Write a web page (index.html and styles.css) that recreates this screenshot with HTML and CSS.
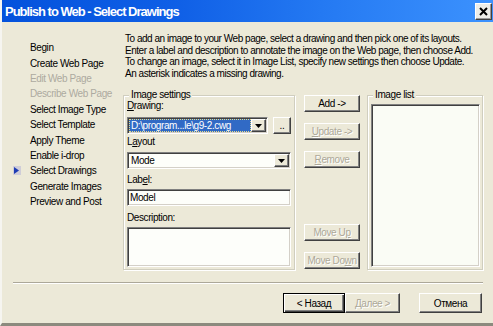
FILE: index.html
```html
<!DOCTYPE html>
<html>
<head>
<meta charset="utf-8">
<title>Publish to Web - Select Drawings</title>
<link rel="stylesheet" href="styles.css">
</head>
<body>
<div class="window">
  <div class="titlebar">
    <span class="title">Publish to Web - Select Drawings</span>
    <span class="close"><svg width="9" height="9" viewBox="0 0 9 9"><path d="M1 1L8 8M8 1L1 8" stroke="#000" stroke-width="2"/></svg></span>
  </div>
  <div class="content">
    <nav class="nav">
      <div class="step"><span class="mark"></span>Begin</div>
      <div class="step"><span class="mark"></span>Create Web Page</div>
      <div class="step disabled"><span class="mark"></span>Edit Web Page</div>
      <div class="step disabled"><span class="mark"></span>Describe Web Page</div>
      <div class="step"><span class="mark"></span>Select Image Type</div>
      <div class="step"><span class="mark"></span>Select Template</div>
      <div class="step"><span class="mark"></span>Apply Theme</div>
      <div class="step"><span class="mark"></span>Enable i-drop</div>
      <div class="step"><span class="mark"><svg width="8" height="9" viewBox="0 0 8 9"><rect width="8" height="9" fill="#CFCDD8"/><path d="M1 1L6 4.5L1 8Z" fill="#1E3CB4"/></svg></span>Select Drawings</div>
      <div class="step"><span class="mark"></span>Generate Images</div>
      <div class="step"><span class="mark"></span>Preview and Post</div>
    </nav>
    <main class="main">
      <p class="intro">To add an image to your Web page, select a drawing and then pick one of its layouts.<br>Enter a label and description to annotate the image on the Web page, then choose Add.<br>To change an image, select it in Image List, specify new settings then choose Update.<br>An asterisk indicates a missing drawing.</p>
      <div class="row">
        <div class="group settings">
          <div class="legend">Image settings</div>
          <div class="lbl"><u>D</u>rawing:</div>
          <div class="drawing-row">
            <div class="combo sunken drawing-combo">
              <div class="field focused">D:\program...le\g9-2.cwg</div>
              <div class="drop raised"><svg width="7" height="4" viewBox="0 0 7 4"><path d="M0 0H7L3.5 4Z" fill="#000"/></svg></div>
            </div>
            <div class="btn raised browse">..</div>
          </div>
          <div class="lbl lbl-layout">L<u>a</u>yout</div>
          <div class="combo sunken layout-combo">
            <div class="field">Mode</div>
            <div class="drop raised"><svg width="7" height="4" viewBox="0 0 7 4"><path d="M0 0H7L3.5 4Z" fill="#000"/></svg></div>
          </div>
          <div class="lbl lbl-label">Lab<u>e</u>l:</div>
          <div class="input sunken">Model</div>
          <div class="lbl lbl-desc">Description:</div>
          <div class="textarea sunken"></div>
        </div>
        <div class="btncol">
          <div class="btn raised">Add -&gt;</div>
          <div class="btn raised disabled gap"><u>U</u>pdate -&gt;</div>
          <div class="btn raised disabled gap"><u>R</u>emove</div>
          <div class="btn raised disabled push">Move U<u>p</u></div>
          <div class="btn raised disabled gap">Move Do<u>w</u>n</div>
        </div>
        <div class="group imglist">
          <div class="legend">Image list</div>
          <div class="listbox sunken"></div>
        </div>
      </div>
    </main>
  </div>
  <div class="sep"></div>
  <div class="footer">
    <div class="btn fbtn default">&lt; Назад</div>
    <div class="btn fbtn raised disabled next">Далее &gt;</div>
    <div class="btn fbtn raised cancel">Отмена</div>
  </div>
</div>
</body>
</html>
```
FILE: styles.css
```css
* { box-sizing: border-box; }
html, body { margin: 0; padding: 0; }
body {
  background: #ECE9D8;
  font-family: "Liberation Sans", Arial, sans-serif;
  font-size: 10px;
  letter-spacing: -0.4px;
  color: #000;
}
u { text-decoration: underline; text-underline-offset: 1px; }

.window {
  width: 493px;
  height: 326px;
  display: flex;
  flex-direction: column;
  background: #ECE9D8;
  border-left: 2px solid #F6F5F0;
  border-bottom: 3px solid #8C8A7E;
  overflow: hidden;
}

.titlebar {
  height: 22px;
  flex: none;
  display: flex;
  align-items: center;
  padding-left: 3px;
  background: linear-gradient(to right, #0452DC 0%, #0F5FE6 35%, #2479F2 65%, #3C92FE 100%);
}
.title {
  color: #fff;
  font-weight: bold;
  font-size: 13px;
  letter-spacing: -1px;
}
.close {
  margin-left: auto;
  margin-right: 1px;
  width: 17px;
  height: 17px;
  display: flex;
  align-items: center;
  justify-content: center;
  background: #EDEDE8;
  border: 1px solid;
  border-color: #fff #404040 #404040 #fff;
  box-shadow: inset -1px -1px 0 #9A9A9A;
}

.content {
  display: flex;
  height: 248px;
  flex: none;
}

.nav {
  width: 121px;
  flex: none;
  padding: 18px 0 0 11px;
}
.step {
  display: flex;
  align-items: center;
  height: 15.4px;
  white-space: nowrap;
}
.mark {
  width: 17px;
  flex: none;
  display: flex;
  align-items: center;
}
.step.disabled { color: #ADAAA0; }

.main { flex: 1; padding-top: 11px; }
.intro {
  margin: 0;
  padding-left: 2px;
  line-height: 11.5px;
  letter-spacing: -0.47px;
  white-space: nowrap;
}

.row {
  display: flex;
  margin-top: 16px;
}

.group {
  border: 1px solid #D0CEBF;
  box-shadow: inset 1px 1px 0 #fff, 1px 1px 0 #fff;
  display: flex;
  flex-direction: column;
}
.legend {
  align-self: flex-start;
  margin: -7px 0 -1px 2px;
  padding: 0 2px;
  background: #ECE9D8;
  height: 12px;
  line-height: 12px;
  white-space: nowrap;
}
.settings {
  width: 172px;
  flex: none;
  padding: 0 3px 2px 3px;
}
.lbl { height: 12px; line-height: 12px; white-space: nowrap; }
.lbl-layout { margin-top: 2px; }
.lbl-label { margin-top: 5px; }
.lbl-desc { margin-top: 6px; }

.sunken {
  border: 1px solid;
  border-color: #808080 #fff #fff #808080;
  box-shadow: inset 1px 1px 0 #404040, inset -1px -1px 0 #D4D0C8;
  background: #FDFEFA;
}
.raised {
  background: #ECE9D8;
  border: 1px solid;
  border-color: #fff #404040 #404040 #fff;
  box-shadow: inset -1px -1px 0 #808080;
}

.drawing-row {
  display: flex;
  margin-top: 5px;
  height: 17px;
}
.combo {
  display: flex;
  padding: 1px;
  height: 17px;
}
.drawing-combo { width: 141px; flex: none; }
.layout-combo { margin-top: 4px; }
.field {
  flex: 1;
  min-width: 0;
  line-height: 13px;
  padding-left: 2px;
  white-space: nowrap;
  overflow: hidden;
}
.field.focused {
  background: #316AC5;
  color: #fff;
  outline: 1px dotted #E8DC8A;
  outline-offset: -1px;
}
.drop {
  width: 15px;
  flex: none;
  display: flex;
  align-items: center;
  justify-content: center;
}
.browse {
  width: 18px;
  margin-left: 5px;
  height: 17px;
}

.input {
  margin-top: 3px;
  height: 17px;
  line-height: 15px;
  padding-left: 2px;
}
.textarea {
  margin-top: 3px;
  height: 40px;
}

.btncol {
  width: 56px;
  flex: none;
  margin: 0 7px 0 9px;
  display: flex;
  flex-direction: column;
  padding-bottom: 1px;
}
.btn {
  height: 17px;
  display: flex;
  align-items: center;
  justify-content: center;
  white-space: nowrap;
  flex: none;
}
.btn.gap { margin-top: 11px; }
.btn.push { margin-top: auto; }
.btn.disabled {
  color: #ACA899;
  text-shadow: 1px 1px 0 #fff;
}

.imglist {
  width: 116px;
  flex: none;
  padding: 0 2px 2px 3px;
}
.listbox {
  flex: 1;
  margin-top: 4px;
  background: #FAFCF5;
}

.sep {
  flex: none;
  height: 2px;
  margin: 12px 10px 0 11px;
  border-top: 1px solid #ACA899;
  border-bottom: 1px solid #fff;
}

.footer {
  flex: none;
  display: flex;
  justify-content: flex-end;
  padding: 9px 11px 0 0;
}
.fbtn { height: 20px; }
.default {
  width: 62px;
  background: #ECE9D8;
  border: 1px solid #000;
  box-shadow: inset 1px 1px 0 #fff, inset -1px -1px 0 #404040, inset -2px -2px 0 #808080;
}
.next { width: 55px; }
.cancel { width: 63px; margin-left: 19px; }
```
